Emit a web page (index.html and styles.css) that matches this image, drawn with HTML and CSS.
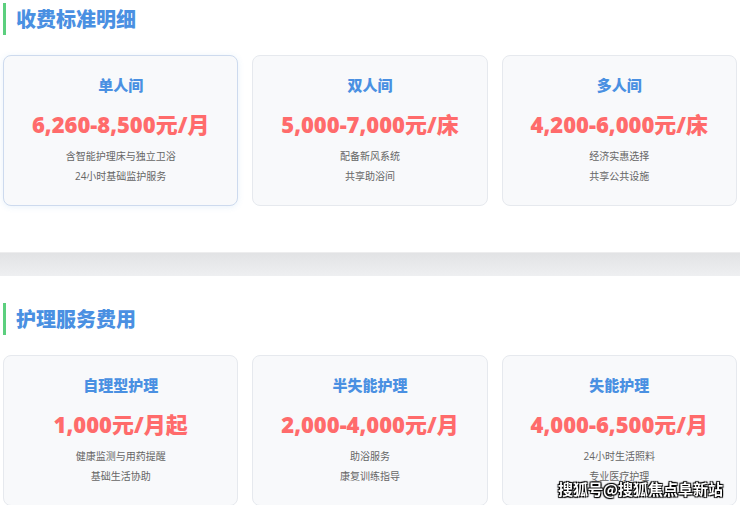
FILE: index.html
```html
<!DOCTYPE html>
<html lang="zh-CN">
<head>
  <meta charset="UTF-8" />
  <meta name="viewport" content="width=device-width, initial-scale=1.0"/>
  <title>收费标准明细</title>
  <link rel="stylesheet" href="styles.css">
</head>
<body>

  <section class="section">
    <h2 class="section-title">收费标准明细</h2>
    <div class="card-grid">
      <div class="card active">
        <h3>单人间</h3>
        <div class="price">6,260-8,500元/月</div>
        <p>含智能护理床与独立卫浴</p>
        <p>24小时基础监护服务</p>
      </div>
      <div class="card">
        <h3>双人间</h3>
        <div class="price">5,000-7,000元/床</div>
        <p>配备新风系统</p>
        <p>共享助浴间</p>
      </div>
      <div class="card">
        <h3>多人间</h3>
        <div class="price">4,200-6,000元/床</div>
        <p>经济实惠选择</p>
        <p>共享公共设施</p>
      </div>
    </div>
  </section>

  <div class="divider"></div>

  <section class="section">
    <h2 class="section-title">护理服务费用</h2>
    <div class="card-grid">
      <div class="card">
        <h3>自理型护理</h3>
        <div class="price">1,000元/月起</div>
        <p>健康监测与用药提醒</p>
        <p>基础生活协助</p>
      </div>
      <div class="card">
        <h3>半失能护理</h3>
        <div class="price">2,000-4,000元/月</div>
        <p>助浴服务</p>
        <p>康复训练指导</p>
      </div>
      <div class="card">
        <h3>失能护理</h3>
        <div class="price">4,000-6,500元/月</div>
        <p>24小时生活照料</p>
        <p>专业医疗护理</p>
      </div>
    </div>
  </section>

  <div class="watermark">搜狐号@搜狐焦点阜新站</div>

</body>
</html>
```

FILE: styles.css
```css
body {
  font-family: "Open Sans", "Noto Sans CJK SC", sans-serif;
  background: white;
  color: #333;
  margin: 0;
  padding: 0;
  overflow: hidden;
}

.section {
  padding: 3px 3px 0 3px;
}

.section-title {
  margin: 0;
  height: 32px;
  line-height: 32px;
  padding-left: 10px;
  border-left: 3px solid #5ccf7e;
  font-family: "Noto Sans CJK SC", sans-serif;
  font-size: 20px;
  font-weight: 900;
  color: #4a90e2;
}

.card-grid {
  display: grid;
  grid-template-columns: repeat(3, 1fr);
  gap: 14px;
  margin-top: 20px;
}

.card {
  background: #f8f9fb;
  border: 1px solid #e6e9ee;
  border-radius: 8px;
  padding: 18px 10px 20px;
  text-align: center;
  height: 111px;
}

.card.active {
  border-color: #cddaee;
  box-shadow: 0 1px 6px rgba(74, 144, 226, 0.12);
}

.card h3 {
  margin: 0;
  font-family: "Noto Sans CJK SC", sans-serif;
  font-size: 15px;
  line-height: 22px;
  font-weight: 900;
  color: #4a90e2;
}

.price {
  margin-top: 13px;
  font-size: 22px;
  line-height: 30px;
  font-weight: 800;
  color: #ff6b6b;
}

.card p {
  margin: 0;
  font-size: 10px;
  line-height: 20px;
  color: #666;
}

.card p:first-of-type {
  margin-top: 7px;
}

.divider {
  height: 23px;
  margin: 46px 0 24px;
  background: linear-gradient(to bottom, #e2e3e5, #eeeff1);
  border-top: 1px solid #ededee;
}

.watermark {
  position: fixed;
  right: 17px;
  bottom: 6px;
  font-family: "Noto Sans CJK SC", sans-serif;
  font-size: 15px;
  font-weight: bold;
  color: white;
  text-shadow: 1px 1px 1px #000, -1px -1px 1px #000, 1px -1px 1px #000, -1px 1px 1px #000;
}
```
